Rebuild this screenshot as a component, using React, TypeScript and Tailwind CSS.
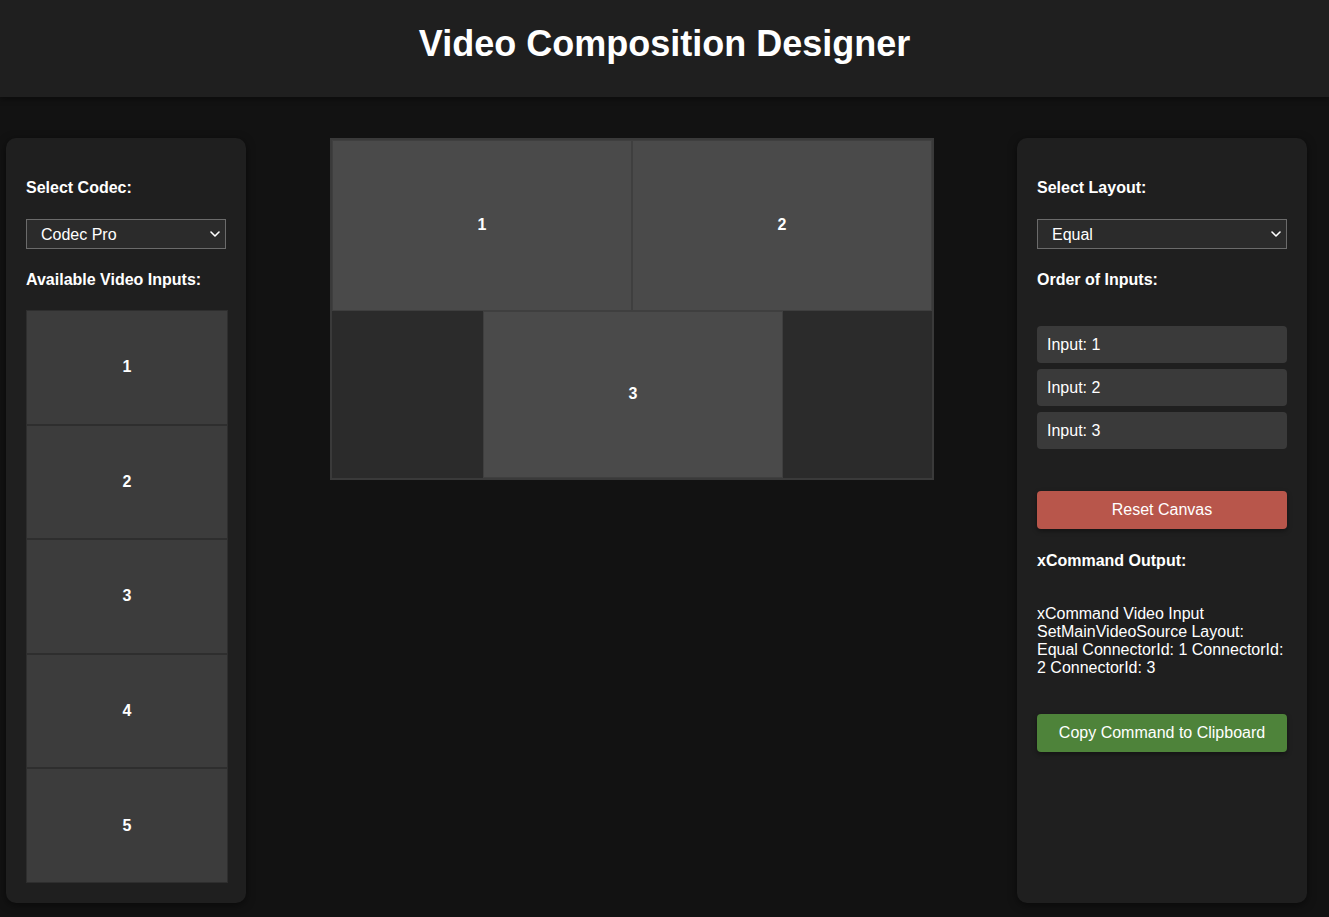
import React, { useState } from 'react';

const font = { fontFamily: '"Liberation Sans", Arial, sans-serif' };

const Chevron = () => (
  <svg
    width="10"
    height="6"
    viewBox="0 0 10 6"
    className="pointer-events-none absolute right-[6px] top-1/2 -translate-y-1/2"
  >
    <path d="M1 1l4 4 4-4" fill="none" stroke="#ffffff" strokeWidth="1.6" strokeLinecap="round" strokeLinejoin="round" />
  </svg>
);

const Select: React.FC<{ value: string; options: string[]; onChange: (v: string) => void }> = ({
  value,
  options,
  onChange,
}) => (
  <div className="relative mt-[22px] h-[30px] w-full">
    <select
      value={value}
      onChange={(e) => onChange(e.target.value)}
      className="block h-[30px] w-full appearance-none border border-[#6b6b6b] bg-[#2b2b2b] pl-[14px] pt-[1px] text-[16px] text-white outline-none"
    >
      {options.map((o) => (
        <option key={o} value={o}>
          {o}
        </option>
      ))}
    </select>
    <Chevron />
  </div>
);

const Tile: React.FC<{ n: number; h: string }> = ({ n, h }) => (
  <div className={`flex ${h} w-[300px] items-center justify-center border border-[#3f3f3f] bg-[#4a4a4a] text-[16px] font-bold text-white`}>
    {n}
  </div>
);

export default function App() {
  const [codec, setCodec] = useState('Codec Pro');
  const [layout, setLayout] = useState('Equal');
  const order = [1, 2, 3];
  const command = `xCommand Video Input SetMainVideoSource Layout: ${layout} ${order
    .map((i) => `ConnectorId: ${i}`)
    .join(' ')}`;

  return (
    <div className="min-h-[917px] bg-[#121212] text-white" style={font}>
      {/* header */}
      <header className="flex h-[97px] items-center justify-center bg-[#1f1f1f] pb-[10px] shadow-[0_2px_6px_rgba(0,0,0,0.4)]">
        <h1 className="text-[36px] font-bold leading-none">Video Composition Designer</h1>
      </header>

      <main className="flex items-stretch pl-[6px] pt-[41px] pb-[14px]">
        {/* left panel */}
        <section className="w-[240px] rounded-[10px] bg-[#1f1f1f] p-5 shadow-[0_2px_8px_rgba(0,0,0,0.5)]">
          <div className="mt-[21px] text-[16px] font-bold leading-[18px]">Select Codec:</div>
          <Select value={codec} options={['Codec Pro', 'Codec Plus', 'Room Kit']} onChange={setCodec} />
          <div className="mt-[22px] text-[16px] font-bold leading-[18px]">Available Video Inputs:</div>
          <div className="mt-[21px] flex flex-col">
            {[1, 2, 3, 4, 5].map((n) => (
              <div
                key={n}
                className="flex h-[114.6px] w-[202px] items-center justify-center border border-[#2e2e2e] bg-[#3c3c3c] text-[16px] font-bold"
              >
                {n}
              </div>
            ))}
          </div>
        </section>

        {/* canvas */}
        <section className="ml-[84px] mr-[83px] self-start">
          <div className="flex w-[604px] flex-col border-2 border-[#3a3a3a] bg-[#2b2b2b]">
            <div className="flex">
              <Tile n={1} h="h-[170.5px]" />
              <Tile n={2} h="h-[170.5px]" />
            </div>
            <div className="flex justify-center pl-[2px]">
              <Tile n={3} h="h-[167px]" />
            </div>
          </div>
        </section>

        {/* right panel */}
        <section className="flex w-[290px] flex-col rounded-[10px] bg-[#1f1f1f] p-5 shadow-[0_2px_8px_rgba(0,0,0,0.5)]">
          <div className="mt-[21px] text-[16px] font-bold leading-[18px]">Select Layout:</div>
          <Select value={layout} options={['Equal', 'Prominent', 'Single']} onChange={setLayout} />
          <div className="mt-[22px] text-[16px] font-bold leading-[18px]">Order of Inputs:</div>
          <div className="mt-[37px] flex flex-col gap-[5.6px]">
            {order.map((i) => (
              <div key={i} className="flex h-[37.4px] items-center rounded-[4px] bg-[#3a3a3a] px-[10px] text-[16px]">
                Input: {i}
              </div>
            ))}
          </div>
          <button className="mt-[42px] h-[38px] w-full rounded-[4px] bg-[#b8564b] text-[16px] text-white shadow-[0_2px_5px_rgba(0,0,0,0.4)]">
            Reset Canvas
          </button>
          <div className="mt-[23px] text-[16px] font-bold leading-[18px]">xCommand Output:</div>
          <p className="mt-[35px] text-[16px] leading-[18px]">{command}</p>
          <button
            onClick={() => navigator.clipboard?.writeText(command)}
            className="mt-[37px] h-[38px] w-full rounded-[4px] bg-[#4e833a] text-[16px] text-white shadow-[0_2px_5px_rgba(0,0,0,0.4)]"
          >
            Copy Command to Clipboard
          </button>
        </section>
      </main>
    </div>
  );
}
